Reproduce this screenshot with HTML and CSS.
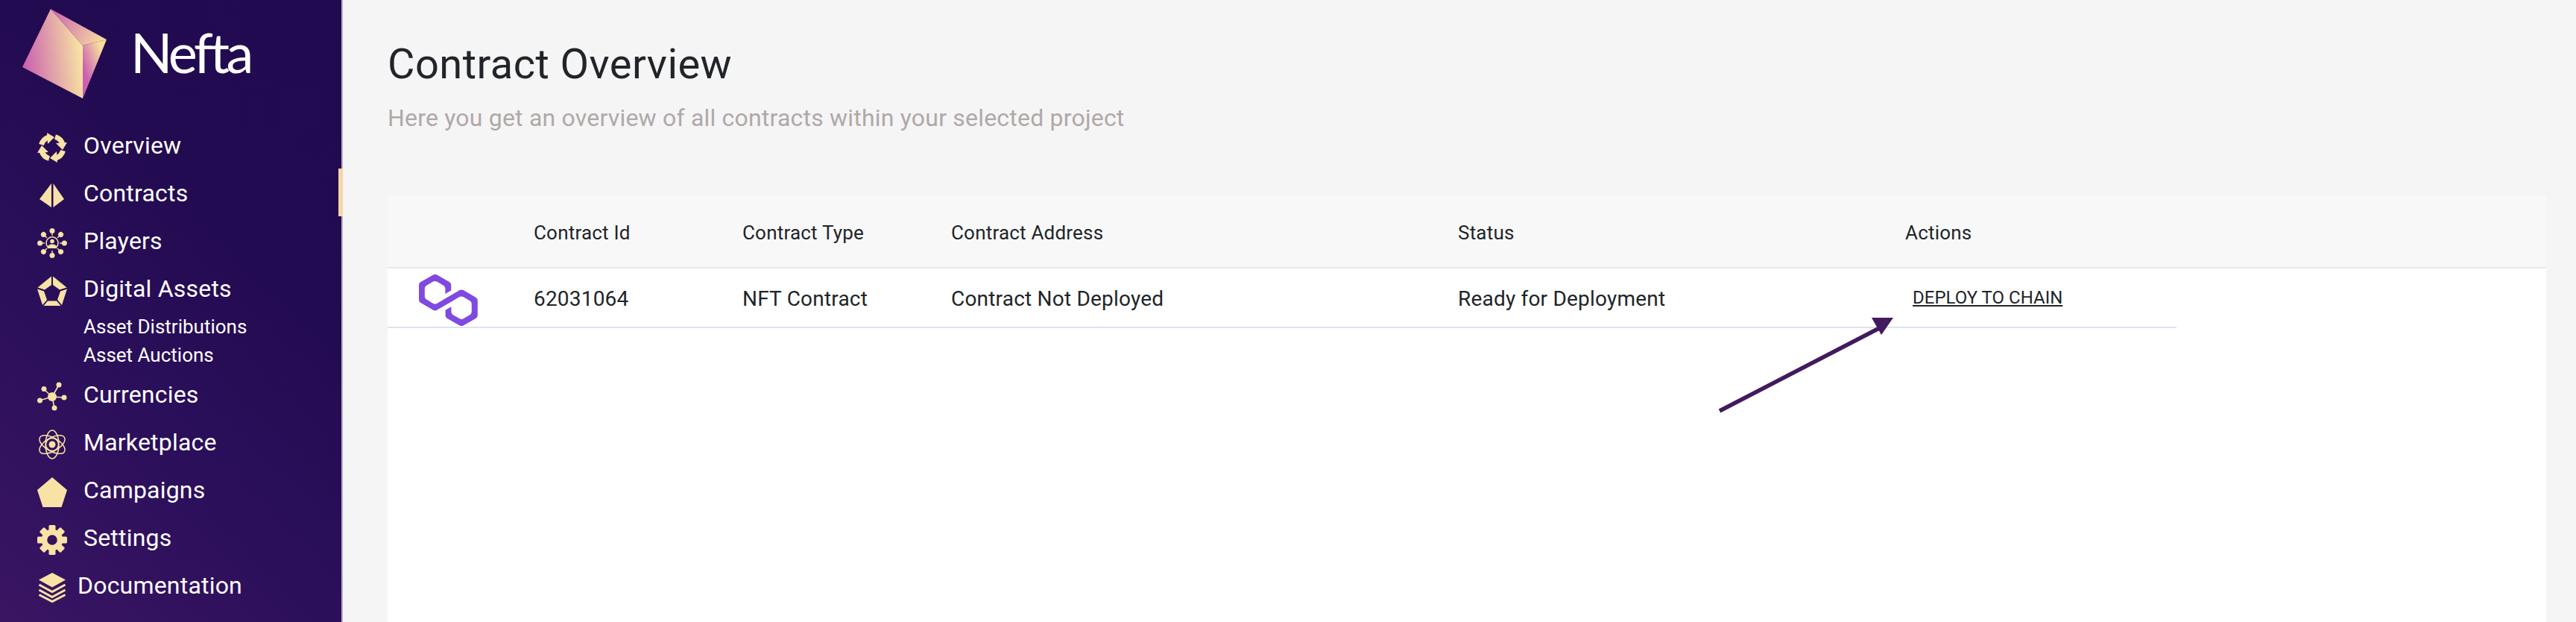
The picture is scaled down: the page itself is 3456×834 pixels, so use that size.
FILE: index.html
```html
<!DOCTYPE html>
<html lang="en">
<head>
<meta charset="utf-8">
<title>Nefta - Contract Overview</title>
<link rel="stylesheet" href="styles.css">
</head>
<body>
<div class="app">
  <aside class="sidebar">
    <div class="brand">
      <svg class="brand-mark" width="150" height="140" viewBox="0 0 150 140">
        <defs>
          <linearGradient id="gl" x1="30" y1="80" x2="111" y2="72" gradientUnits="userSpaceOnUse"><stop offset="0" stop-color="#c95fb0"/><stop offset="1" stop-color="#f9e6a2"/></linearGradient>
          <linearGradient id="gt" x1="75" y1="20" x2="140" y2="55" gradientUnits="userSpaceOnUse"><stop offset="0" stop-color="#cf6fb0"/><stop offset="1" stop-color="#f8dd9f"/></linearGradient>
          <linearGradient id="gr" x1="111" y1="90" x2="140" y2="80" gradientUnits="userSpaceOnUse"><stop offset="0" stop-color="#cb5fb2"/><stop offset="1" stop-color="#f7dc9e"/></linearGradient>
        </defs>
        <polygon points="68,12 111,61 111,132 30,90" fill="url(#gl)"/>
        <polygon points="68,12 143,53 111,61" fill="url(#gt)"/>
        <polygon points="111,61 143,53 111,132" fill="url(#gr)"/>
      </svg>
      <span class="brand-name">Nefta</span>
    </div>
    <nav class="nav">
      <a class="nav-item">
        <svg class="icon" viewBox="0 0 40 40"><g id="ov"><path d="M5.500 16A15 15 0 0 1 15 6" class="ln" stroke-width="7"/><polygon points="13,0 23,6 14,15" class="fl"/></g><use href="#ov" transform="rotate(90 20 20)"/><use href="#ov" transform="rotate(180 20 20)"/><use href="#ov" transform="rotate(270 20 20)"/></svg>
        <span>Overview</span>
      </a>
      <a class="nav-item active">
        <svg class="icon" viewBox="0 0 40 40"><polygon points="19,4 19,36 3,25" class="fl"/><polygon points="21.500,4 21.500,36 36,25" class="fl"/></svg>
        <span>Contracts</span>
      </a>
      <a class="nav-item">
        <svg class="icon" viewBox="0 0 40 40">
          <g id="pd"><circle cx="20" cy="3.600" r="3.500" class="fl"/><path d="M20 6v4" class="ln" stroke-width="1.400"/></g>
          <use href="#pd" transform="rotate(45 20 20)"/><use href="#pd" transform="rotate(90 20 20)"/><use href="#pd" transform="rotate(135 20 20)"/><use href="#pd" transform="rotate(180 20 20)"/><use href="#pd" transform="rotate(225 20 20)"/><use href="#pd" transform="rotate(270 20 20)"/><use href="#pd" transform="rotate(315 20 20)"/>
          <path d="M14 25A8 8 0 1 1 26 25" class="ln" stroke-width="1.500"/>
          <circle cx="20" cy="17.500" r="2.800" class="fl"/>
          <path d="M13.500 27c0-4 3-5.500 6.500-5.500s6.500 1.500 6.500 5.500z" class="fl"/>
        </svg>
        <span>Players</span>
      </a>
      <a class="nav-item">
        <svg class="icon" viewBox="0 0 40 40">
          <polygon points="19,0.500 19,12 10,18.500 0.500,15.500" class="fl"/>
          <polygon points="21,0.500 21,12 30,18.500 39.500,15.500" class="fl"/>
          <polygon points="40,17.500 31,20.500 27,32 33,39" class="fl"/>
          <polygon points="0,17.500 9,20.500 13,32 7,39" class="fl"/>
          <polygon points="8.500,40 14,33.500 26,33.500 31.500,40" class="fl"/>
        </svg>
        <span>Digital Assets</span>
      </a>
      <div class="subnav">
        <a class="sub-item">Asset Distributions</a>
        <a class="sub-item">Asset Auctions</a>
      </div>
      <a class="nav-item">
        <svg class="icon" viewBox="0 0 40 40">
          <path d="M20 20L29 4M20 20L9 10M20 20L36 21M20 20L23 35M20 20L3 25" class="ln" stroke-width="1.600"/>
          <circle cx="20" cy="20" r="6" class="fl"/><circle cx="29" cy="4" r="3.500" class="fl"/><circle cx="9" cy="9.600" r="3.500" class="fl"/><circle cx="36" cy="21" r="3.500" class="fl"/><circle cx="23" cy="35" r="3.500" class="fl"/><circle cx="3.500" cy="25" r="3.500" class="fl"/>
        </svg>
        <span>Currencies</span>
      </a>
      <a class="nav-item">
        <svg class="icon" viewBox="0 0 40 40">
          <ellipse cx="20" cy="20" rx="9" ry="19" class="ln" stroke-width="1.500"/>
          <ellipse cx="20" cy="20" rx="9" ry="19" class="ln" stroke-width="1.500" transform="rotate(60 20 20)"/>
          <ellipse cx="20" cy="20" rx="9" ry="19" class="ln" stroke-width="1.500" transform="rotate(120 20 20)"/>
          <circle cx="20" cy="20" r="4.500" class="fl"/>
          <circle cx="20" cy="20" r="8.500" class="ln" stroke-width="1.500"/>
        </svg>
        <span>Marketplace</span>
      </a>
      <a class="nav-item">
        <svg class="icon" viewBox="0 0 40 40"><polygon points="20,0 40,17 32.500,40 7.500,40 0,17" class="fl"/></svg>
        <span>Campaigns</span>
      </a>
      <a class="nav-item">
        <svg class="icon" viewBox="0 0 40 40">
          <circle cx="20" cy="20" r="10.500" class="ln" stroke-width="7.500"/>
          <g id="gr1"><rect x="15.500" y="0" width="9" height="9" rx="1.500" class="fl"/></g>
          <use href="#gr1" transform="rotate(45 20 20)"/><use href="#gr1" transform="rotate(90 20 20)"/><use href="#gr1" transform="rotate(135 20 20)"/><use href="#gr1" transform="rotate(180 20 20)"/><use href="#gr1" transform="rotate(225 20 20)"/><use href="#gr1" transform="rotate(270 20 20)"/><use href="#gr1" transform="rotate(315 20 20)"/>
        </svg>
        <span>Settings</span>
      </a>
      <a class="nav-item doc">
        <svg class="icon" viewBox="0 0 40 40">
          <polygon points="20,0 38,9.500 20,19.500 2,9.500" class="fl"/>
          <path d="M2.500 16L20 25.500 37.500 16M2.500 23L20 32.500 37.500 23M2.500 29.500L20 38.500 37.500 29.500" class="ln" stroke-width="3"/>
        </svg>
        <span>Documentation</span>
      </a>
    </nav>
  </aside>
  <main class="main">
    <header class="page-head">
      <h1>Contract Overview</h1>
      <p>Here you get an overview of all contracts within your selected project</p>
    </header>
    <section class="panel">
      <div class="cols head">
        <div></div><div>Contract Id</div><div>Contract Type</div><div>Contract Address</div><div>Status</div><div>Actions</div>
      </div>
      <div class="cols row">
        <div class="chain">
          <svg width="79" height="69" viewBox="0 0 38.400 33.500"><path fill="#8049e0" d="M29,10.200c-0.700-0.400-1.600-0.400-2.400,0L21,13.500l-3.800,2.100l-5.500,3.300c-0.700,0.400-1.600,0.400-2.400,0L5,16.300c-0.700-0.400-1.200-1.200-1.200-2.100v-5c0-0.800,0.400-1.600,1.200-2.100l4.300-2.500c0.700-0.400,1.600-0.400,2.400,0L16,7.200c0.700,0.400,1.200,1.200,1.200,2.100v3.300l3.800-2.200V7c0-0.800-0.400-1.600-1.200-2.100l-8-4.700c-0.700-0.400-1.600-0.400-2.400,0L1.200,4.900C0.400,5.300,0,6.100,0,7v9.400c0,0.800,0.400,1.600,1.200,2.100l8.100,4.700c0.700,0.400,1.600,0.400,2.400,0l5.500-3.200l3.800-2.200l5.500-3.200c0.700-0.400,1.600-0.400,2.400,0l4.300,2.500c0.700,0.400,1.200,1.200,1.200,2.100v5c0,0.800-0.400,1.600-1.200,2.100L29,28.800c-0.700,0.400-1.600,0.400-2.400,0l-4.300-2.500c-0.700-0.400-1.200-1.200-1.200-2.100V21l-3.800,2.200v3.300c0,0.800,0.400,1.600,1.200,2.100l8.100,4.700c0.700,0.400,1.600,0.400,2.400,0l8.100-4.700c0.700-0.400,1.200-1.200,1.200-2.100V17c0-0.800-0.400-1.600-1.200-2.100L29,10.200z"/></svg>
        </div>
        <div>62031064</div><div>NFT Contract</div><div>Contract Not Deployed</div><div>Ready for Deployment</div>
        <div class="action-cell"><a class="deploy">DEPLOY TO CHAIN</a></div>
      </div>
      <svg class="arrow" width="240" height="130" viewBox="0 0 240 130"><path d="M3 125L225 10" stroke="#421a5e" stroke-width="5.500" fill="none"/><polygon points="207,0 236,0 220,23" fill="#421a5e"/></svg>
    </section>
  </main>
</div>
</body>
</html>
```
FILE: styles.css
```css
* { box-sizing: border-box; }
html, body { margin: 0; height: 100%; overflow: hidden; }
body { font-family: "Roboto", "Noto Sans", sans-serif; color: #212529; background: #f5f5f5; }
.app { display: flex; height: 834px; }

.sidebar { width: 460px; flex: none; background: linear-gradient(45deg, #3a1562 0%, #2b0f5b 36%, #230b51 64%, #220a50 100%); border-right: 2px solid #b9aecb; color: #fff; }
.brand { display: flex; height: 163px; position: relative; }
.brand-mark { flex: none; }
.brand-name { font-family: "Lato", sans-serif; font-weight: 400; font-size: 74px; line-height: 1; margin: 33px 0 0 25px; letter-spacing: -4.5px; color: #fff; }

.nav { display: flex; flex-direction: column; }
.nav-item { display: flex; align-items: center; height: 64px; padding-left: 50px; gap: 22px; font-size: 32px; letter-spacing: 0.2px; color: #fff; position: relative; }
.nav-item.doc { gap: 14px; }
.icon { width: 40px; height: 40px; flex: none; margin-top: 6px; overflow: visible; }
.fl { fill: #f8e2a5; }
.ln { fill: none; stroke: #f8e2a5; }
.nav-item.active::after { content: ""; position: absolute; right: -2px; top: -1px; width: 6px; height: 64px; background: #f7d6a6; }
.subnav { display: flex; flex-direction: column; padding: 0 0 2px 112px; }
.sub-item { height: 38px; line-height: 38px; font-size: 26px; color: #fff; }

.main { flex: 1; padding: 0 40px 0 60px; display: flex; flex-direction: column; min-width: 0; }
.page-head { height: 263px; padding-top: 50px; }
.page-head h1 { margin: 0; font-size: 56px; line-height: 72px; font-weight: 400; letter-spacing: 0.45px; color: #212529; }
.page-head p { margin: 12px 0 0; font-size: 32px; line-height: 48px; letter-spacing: 0.2px; color: #b0a8a8; }

.panel { flex: 1; background: #fff; position: relative; }
.cols { display: grid; align-items: center; letter-spacing: 0.2px; }
.head { height: 97px; background: #f8f8f8; border-bottom: 2px solid #e8e8e8; font-size: 26px; padding-top: 2px; grid-template-columns: 196px 280px 280px 680px 600px 1fr; }
.row { height: 80px; width: 2400px; border-bottom: 2px solid #dfe3ee; font-size: 28px; padding-top: 2px; grid-template-columns: 196px 280px 280px 680px 600px 364px; }
.chain { display: flex; padding-left: 42px; }
.chain svg { display: block; margin-top: 5px; }
.action-cell { padding-bottom: 5px; }
.deploy { display: inline-block; margin-left: 10px; font-size: 24px; letter-spacing: 0; text-decoration: underline; color: #212529; }
.arrow { position: absolute; left: 1784px; top: 163px; }
```
